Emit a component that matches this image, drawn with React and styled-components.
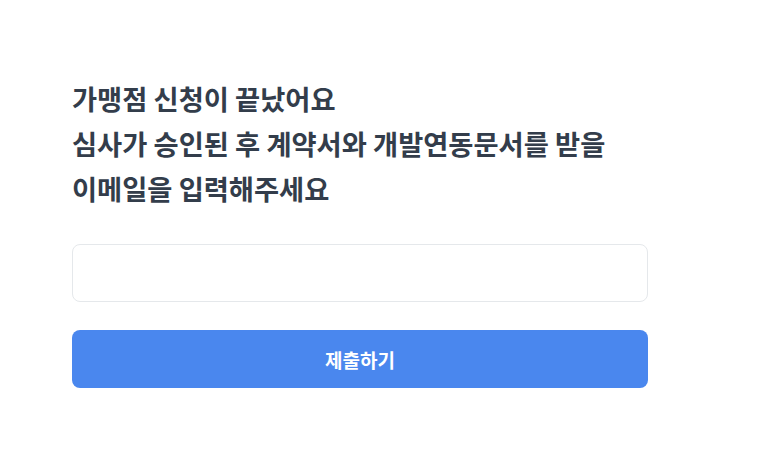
import React from 'react'
import styled, { createGlobalStyle } from 'styled-components'

const GlobalStyle = createGlobalStyle`
  body {
    margin: 0;
    background: #ffffff;
    font-family: "Noto Sans CJK KR", "Noto Sans", sans-serif;
  }
`

const Page = styled.main`
  padding: 76px 72px 0;
  width: 576px;
`

const Title = styled.h1`
  margin: 0;
  font-size: 27.3px;
  line-height: 45px;
  font-weight: 700;
  color: #333d4b;
  letter-spacing: 0;
`

const EmailInput = styled.input`
  display: block;
  box-sizing: border-box;
  width: 100%;
  height: 58px;
  margin-top: 33px;
  border: 1px solid #e5e8eb;
  border-radius: 8px;
  padding: 0 16px;
  font-size: 16px;
  font-family: inherit;
  outline: none;
`

const SubmitButton = styled.button`
  display: block;
  width: 100%;
  height: 58px;
  margin-top: 28px;
  border: none;
  border-radius: 8px;
  background: #4a87ee;
  color: #ffffff;
  font-family: inherit;
  font-size: 19px;
  font-weight: 700;
  cursor: pointer;
`

const App = () => {
  return (
    <>
      <GlobalStyle />
      <Page>
        <Title>
          가맹점 신청이 끝났어요<br />
          심사가 승인된 후 계약서와 개발연동문서를 받을<br />
          이메일을 입력해주세요
        </Title>
        <EmailInput type="email" />
        <SubmitButton type="button">제출하기</SubmitButton>
      </Page>
    </>
  )
}

export default App
